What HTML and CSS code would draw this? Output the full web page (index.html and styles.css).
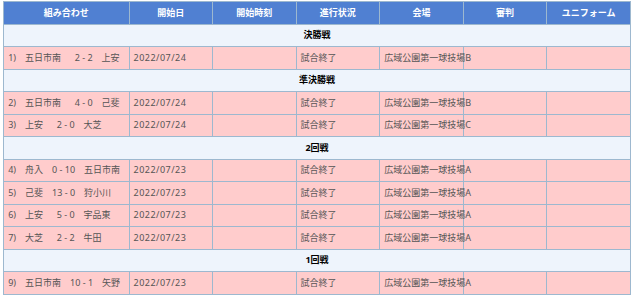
FILE: index.html
```html
<!DOCTYPE html>
<html lang="ja">
<head>
<meta charset="utf-8">
<link rel="stylesheet" href="styles.css">
</head>
<body>
<table class="results">
  <colgroup>
    <col class="c-match"><col class="c-col"><col class="c-col"><col class="c-col"><col class="c-col"><col class="c-col"><col class="c-col">
  </colgroup>
  <thead>
    <tr>
      <th>組み合わせ</th><th>開始日</th><th>開始時刻</th><th>進行状況</th><th>会場</th><th>審判</th><th>ユニフォーム</th>
    </tr>
  </thead>
  <tbody>
    <tr class="round"><td colspan="7">決勝戦</td></tr>
    <tr class="game"><td>1)　五日市南　&nbsp;&nbsp;2 - 2　上安</td><td class="date">2022/07/24</td><td></td><td>試合終了</td><td>広域公園第一球技場B</td><td></td><td></td></tr>
    <tr class="round"><td colspan="7">準決勝戦</td></tr>
    <tr class="game"><td>2)　五日市南　&nbsp;&nbsp;4 - 0　己斐</td><td class="date">2022/07/24</td><td></td><td>試合終了</td><td>広域公園第一球技場B</td><td></td><td></td></tr>
    <tr class="game"><td>3)　上安　&nbsp;&nbsp;2 - 0　大芝</td><td class="date">2022/07/24</td><td></td><td>試合終了</td><td>広域公園第一球技場C</td><td></td><td></td></tr>
    <tr class="round"><td colspan="7">2回戦</td></tr>
    <tr class="game"><td>4)　舟入　0 - 10　五日市南</td><td class="date">2022/07/23</td><td></td><td>試合終了</td><td>広域公園第一球技場A</td><td></td><td></td></tr>
    <tr class="game"><td>5)　己斐　13 - 0　狩小川</td><td class="date">2022/07/23</td><td></td><td>試合終了</td><td>広域公園第一球技場A</td><td></td><td></td></tr>
    <tr class="game"><td>6)　上安　&nbsp;&nbsp;5 - 0　宇品東</td><td class="date">2022/07/23</td><td></td><td>試合終了</td><td>広域公園第一球技場A</td><td></td><td></td></tr>
    <tr class="game"><td>7)　大芝　&nbsp;&nbsp;2 - 2　牛田</td><td class="date">2022/07/23</td><td></td><td>試合終了</td><td>広域公園第一球技場A</td><td></td><td></td></tr>
    <tr class="round"><td colspan="7">1回戦</td></tr>
    <tr class="game"><td>9)　五日市南　10 - 1　矢野</td><td class="date">2022/07/23</td><td></td><td>試合終了</td><td>広域公園第一球技場A</td><td></td><td></td></tr>
  </tbody>
</table>
</body>
</html>
```
FILE: styles.css
```css
html, body {
  margin: 0;
  padding: 0;
  background: #ffffff;
}

body {
  padding-top: 1px;
  font-family: "Noto Sans", "Noto Sans CJK JP", sans-serif;
  font-size: 9px;
}

.results {
  width: 99%;
  margin: 0 auto;
  border-collapse: collapse;
  table-layout: fixed;
  border: 1px solid #9db8cf;
}

.c-match { width: 20%; }
.c-col { width: 13.333%; }

.results th,
.results td {
  border: 1px solid #9db8cf;
  white-space: nowrap;
  overflow: visible;
  height: 21.5px;
  padding: 0 0 0 4px;
  line-height: 12px;
  vertical-align: middle;
}

.results th {
  background: #5080d2;
  color: #ffffff;
  font-weight: bold;
  text-align: center;
  padding: 0;
}

.round td {
  background: #eef4fc;
  color: #000000;
  font-weight: bold;
  text-align: center;
  padding: 0;
}

.game td {
  background: #ffcccc;
  color: #555555;
  text-align: left;
}

.game .date {
  letter-spacing: 0.5px;
}
```
